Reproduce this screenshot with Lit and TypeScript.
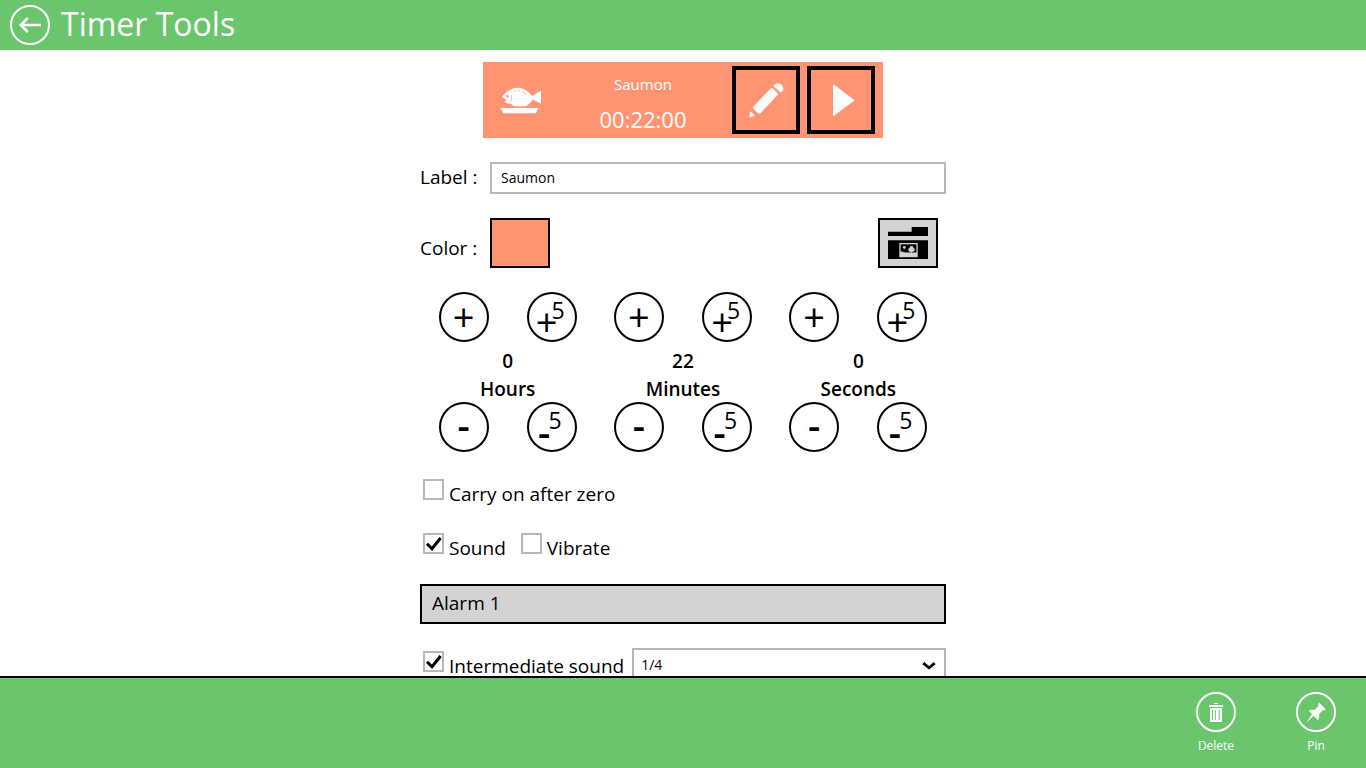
import { LitElement, html, css, svg } from "lit";
import { customElement, state } from "lit/decorators.js";

const UNITS = [
  { name: "Hours", seconds: 3600 },
  { name: "Minutes", seconds: 60 },
  { name: "Seconds", seconds: 1 },
];

const pad = (n: number) => String(n).padStart(2, "0");

const backIcon = svg`<svg viewBox="0 0 36 36" width="36" height="36" fill="none" stroke="#fff" stroke-width="2.6">
  <path d="M8.600 18H29M15.800 11 8.800 18l7 7" /></svg>`;

const fishIcon = svg`<svg viewBox="0 0 44 28" width="44" height="28" fill="#fff">
  <path d="M2 10.800C5 7 10.500 1.800 18 1.800c6 0 10.600 4.200 14.200 8.200L41 4.500v13.300l-8.200-4.300C30.500 16.500 28.500 19 26 20.200H14.500c-1.800-.9-2.700-1.700-4.200-2.800-2.200.5-4.300-.2-5.800-1.900l2.300-1.200z" />
  <circle cx="7.400" cy="10.200" r="1.200" fill="#ff9473" />
  <path d="M11.300 9.400c.9 2.400.5 4.600-1.100 6.600M14.300 5.400l1.800-.8M18.300 4.600l2.200.3M22.500 5.800l3.800 2.400" fill="none" stroke="#ff9473" stroke-width=".7" />
  <path d="M.4 22h38.200l-3 5.200H3.400z" /></svg>`;

const pencilIcon = svg`<svg viewBox="0 0 60 60" width="60" height="60" fill="#fff">
  <path d="M34.600 18.600q1.200-1.100 2.300 0l4.400 4.400q1.100 1.200 0 2.300L24.400 43.200q-1.200 1.100-2.300 0l-4.600-4.400q-1.100-1.200 0-2.300z" />
  <path d="M37.300 15.900c2.300-3.100 5.700-3.600 8.200-1.100 2.500 2.500 2.300 5.800-.6 8z" />
  <path d="M14.600 41.200l4.400 4.200-3.600 1.700-2.300-.3z" /></svg>`;

const playIcon = svg`<svg viewBox="0 0 60 60" width="60" height="60" fill="#fff"><path d="M22 14l21.700 16.300L22 46.400z" /></svg>`;

const folderIcon = svg`<svg viewBox="0 0 56 46" width="56" height="46">
  <path d="M8 11.700h23.700V7H48v9H8zM8 20.300h40V39H8z" />
  <path d="M19.300 23h18.400v14.200H19.300z" fill="#d3d3d3" />
  <path d="M20.600 24.300h15.800v8.200H20.600z" />
  <circle cx="24.300" cy="27.400" r="1.400" fill="#d3d3d3" />
  <path d="M31.500 26a2 2 0 0 1 2 2 1.900 1.900 0 0 1-.6 3.700h-.8v1h-1.300v-1H30a1.900 1.900 0 0 1-.5-3.700 2 2 0 0 1 2-2zM20.600 31l5 2h-5z" fill="#d3d3d3" /></svg>`;

const trashIcon = svg`<svg viewBox="0 0 36 36" width="36" height="36" fill="#fff">
  <path d="M16 9h4v1h-4zM11 11h14v2H11z" />
  <path fill-rule="evenodd" d="M12 14h12v14H12zM14 16v10h1V16zM16.800 16v10h1V16zM20.700 16v10h1V16z" /></svg>`;

const pinIcon = svg`<svg viewBox="0 0 36 36" width="36" height="36" fill="#fff">
  <path d="M21.200 8.600l6.600 6.700-1.700 1.200-1.300-.2-3.900 3.900c.7 2.200.4 4.200-1 5.800l-4.300-4.300-7.300 7 5.700-8.600-3.200-3.100c1.600-1.400 3.700-1.700 5.800-1l3.900-3.900-.3-1.900z" /></svg>`;

const chevronIcon = svg`<svg class="chevron" viewBox="0 0 14 10" width="14" height="10" fill="none" stroke="#000" stroke-width="2.800">
  <path d="M1.300 2.200 7 6.800l5.700-4.600" /></svg>`;

@customElement("app-root")
export class AppRoot extends LitElement {
  @state() private label = "Saumon";
  @state() private total = 22 * 60;

  static styles = css`
    :host {
      display: flex;
      flex-direction: column;
      height: 100vh;
      background: #fff;
      color: #000;
      font: 19px/30px "Open Sans", "Noto Sans", sans-serif;
    }
    * {
      box-sizing: border-box;
    }
    button,
    input,
    select {
      margin: 0;
      padding: 0;
      border-radius: 0;
      background: none;
      color: inherit;
      font: inherit;
    }
    svg {
      display: block;
      flex: none;
    }
    .top {
      display: flex;
      flex: none;
      align-items: center;
      gap: 11px;
      height: 50px;
      padding: 0 10px;
      background: #6bc56d;
      color: #fff;
    }
    .title {
      margin: 0;
      padding-bottom: 2px;
      font-size: 32px;
      font-weight: 400;
      line-height: 48px;
    }
    .ring {
      flex: none;
      width: 40px;
      height: 40px;
      border: 2px solid #fff;
      border-radius: 50%;
    }
    .content {
      flex: 1;
      min-height: 0;
      overflow-y: auto;
      scrollbar-width: none;
      padding: 12px 20px;
    }
    .editor {
      display: flex;
      flex-direction: column;
      gap: 24px;
      width: 100%;
      max-width: 526px;
      margin: 0 auto;
    }
    .card {
      display: flex;
      align-self: center;
      align-items: center;
      width: 100%;
      max-width: 400px;
      height: 76px;
      padding-right: 8px;
      background: #ff9473;
      color: #fff;
    }
    .picture {
      width: 71px;
      padding-left: 17px;
    }
    .readout {
      display: flex;
      flex: 1;
      flex-direction: column;
      gap: 10px;
      padding-top: 8px;
      text-align: center;
    }
    .name {
      font-size: 15px;
      line-height: 20px;
    }
    .time {
      font-size: 22px;
      line-height: 30px;
    }
    .actions {
      display: flex;
      gap: 7px;
    }
    .action {
      width: 68px;
      height: 68px;
      border: 4px solid #000;
    }
    .row {
      display: flex;
      gap: 12px;
    }
    .caption {
      min-width: 58px;
    }
    .text {
      flex: 1;
      min-width: 0;
      height: 32px;
      padding: 0 9px 2px;
      border: 2px solid #b8b8b8;
      font-size: 14px;
    }
    .colors {
      align-items: center;
      padding-right: 8px;
    }
    .colors .caption {
      padding-top: 10px;
    }
    .swatch,
    .browse {
      width: 60px;
      height: 50px;
      border: 2px solid #000;
    }
    .swatch {
      background: #ff9473;
    }
    .browse {
      margin-left: auto;
      background: #d3d3d3;
    }
    .dials {
      display: grid;
      grid-template-columns: repeat(3, 1fr);
    }
    .dial {
      display: grid;
      grid-template-columns: 1fr 1fr;
      column-gap: 1px;
      justify-items: center;
    }
    .amount {
      display: flex;
      flex-direction: column;
      grid-column: 1 / -1;
      height: 60px;
      padding-top: 5px;
      font-weight: 600;
      line-height: 28px;
      text-align: center;
    }
    .step {
      position: relative;
      display: flex;
      align-items: center;
      justify-content: center;
      width: 50px;
      height: 50px;
      border: 2px solid #000;
      border-radius: 50%;
    }
    .sign {
      height: 46px;
      font-size: 38px;
      line-height: 44px;
    }
    .minus {
      font-weight: 600;
      line-height: 40px;
    }
    .five .plus {
      padding-right: 10px;
      line-height: 54px;
    }
    .five .minus {
      padding-right: 15px;
      line-height: 54px;
    }
    .by {
      position: absolute;
      top: 2px;
      right: 10px;
      font-size: 23px;
      line-height: 28px;
    }
    .minus + .by {
      right: 13px;
    }
    .checks {
      display: flex;
      gap: 12px;
      height: 30px;
    }
    .interval {
      gap: 8px;
    }
    .check {
      display: flex;
      align-items: flex-start;
      gap: 5px;
      padding-left: 3px;
      line-height: 36px;
      white-space: nowrap;
    }
    .box {
      appearance: none;
      width: 21px;
      height: 21px;
      margin-top: 3px;
      border: 2px solid #b8b8b8;
      background: #fff;
    }
    .box:checked {
      background: #fff
        url("data:image/svg+xml,%3Csvg xmlns='http://www.w3.org/2000/svg' viewBox='0 0 17 17'%3E%3Cpath d='M2 8.700 7 13.700 15.600 3' fill='none' stroke='%23000' stroke-width='3'/%3E%3C/svg%3E")
        center / 17px 17px no-repeat;
    }
    .alarm {
      height: 40px;
      padding: 0 10px 2px;
      border: 2px solid #000;
      background: #d3d3d3;
      text-align: left;
    }
    .picker {
      position: relative;
      flex: 1;
    }
    .select {
      appearance: none;
      width: 100%;
      height: 34px;
      padding: 0 7px;
      border: 2px solid #b8b8b8;
      font-size: 14px;
    }
    .chevron {
      position: absolute;
      top: 13px;
      right: 10px;
      pointer-events: none;
    }
    .bar {
      display: flex;
      flex: none;
      justify-content: flex-end;
      height: 92px;
      border-top: 2px solid #000;
      background: #6bc56d;
      color: #fff;
    }
    .command {
      display: flex;
      flex-direction: column;
      align-items: center;
      gap: 4px;
      width: 100px;
      padding-top: 14px;
      border: 0;
      font-size: 12px;
      line-height: 20px;
    }
  `;

  private add(n: number) {
    this.total = Math.max(0, this.total + n);
  }

  private parts() {
    const t = this.total;
    return [Math.floor(t / 3600), Math.floor(t / 60) % 60, t % 60];
  }

  private step(sign: 1 | -1, by: number, unit: (typeof UNITS)[number]) {
    const five = by === 5;
    return html`<button
      class="step ${five ? "five" : ""}"
      aria-label="${sign > 0 ? "Add" : "Remove"} ${by} ${unit.name}"
      @click=${() => this.add(sign * by * unit.seconds)}
    ><span class="sign ${sign > 0 ? "plus" : "minus"}">${sign > 0 ? "+" : "-"}</span>${five ? html`<span class="by">5</span>` : ""}</button>`;
  }

  render() {
    const parts = this.parts();
    return html`
      <header class="top">
        <button class="ring" aria-label="Back">${backIcon}</button>
        <h1 class="title">Timer Tools</h1>
      </header>
      <main class="content">
        <div class="editor">
          <section class="card">
            <div class="picture">${fishIcon}</div>
            <div class="readout">
              <span class="name">${this.label}</span>
              <span class="time">${parts.map(pad).join(":")}</span>
            </div>
            <div class="actions">
              <button class="action" aria-label="Edit">${pencilIcon}</button>
              <button class="action" aria-label="Start">${playIcon}</button>
            </div>
          </section>
          <div class="row">
            <label class="caption" for="label">Label :</label>
            <input class="text" id="label" type="text" .value=${this.label}
              @input=${(e: Event) => (this.label = (e.target as HTMLInputElement).value)} />
          </div>
          <div class="row colors">
            <label class="caption" for="color">Color :</label>
            <button class="swatch" id="color"></button>
            <button class="browse" aria-label="Choose picture">${folderIcon}</button>
          </div>
          <div class="dials">
            ${UNITS.map(
              (u, i) => html`<div class="dial">
                ${this.step(1, 1, u)}${this.step(1, 5, u)}
                <div class="amount"><span>${parts[i]}</span><span>${u.name}</span></div>
                ${this.step(-1, 1, u)}${this.step(-1, 5, u)}
              </div>`
            )}
          </div>
          <div class="checks">
            <label class="check"><input class="box" type="checkbox" />Carry on after zero</label>
          </div>
          <div class="checks">
            <label class="check"><input class="box" type="checkbox" checked />Sound</label>
            <label class="check"><input class="box" type="checkbox" />Vibrate</label>
          </div>
          <button class="alarm">Alarm 1</button>
          <div class="checks interval">
            <label class="check"><input class="box" type="checkbox" checked />Intermediate sound</label>
            <div class="picker">
              <select class="select" aria-label="Intermediate sound interval">
                <option>1/4</option>
                <option>1/3</option>
                <option>1/2</option>
              </select>
              ${chevronIcon}
            </div>
          </div>
        </div>
      </main>
      <footer class="bar">
        <button class="command"><span class="ring">${trashIcon}</span>Delete</button>
        <button class="command"><span class="ring">${pinIcon}</span>Pin</button>
      </footer>
    `;
  }
}
